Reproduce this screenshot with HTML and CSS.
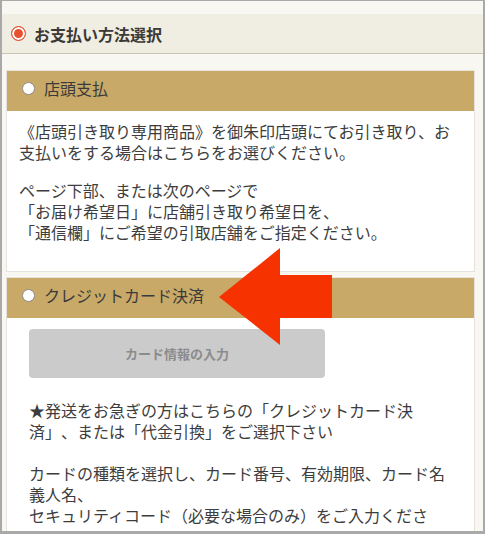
FILE: index.html
```html
<!DOCTYPE html>
<html>
<head>
    <meta charset="utf-8">
    <title>お支払い方法選択</title>
    <link rel="stylesheet" href="styles.css">
</head>
<body>
<div class="frame">
    <h2 class="title"><span class="radio radio-on"></span>お支払い方法選択</h2>

    <div class="methods">
        <div class="method">
            <div class="methodHead"><span class="radio"></span>店頭支払</div>
            <div class="methodBody shop">
                <p>《店頭引き取り専用商品》を御朱印店頭にてお引き取り、お支払いをする場合はこちらをお選びください。</p>
                <p>ページ下部、または次のページで<br>「お届け希望日」に店舗引き取り希望日を、<br>「通信欄」にご希望の引取店舗をご指定ください。</p>
            </div>
        </div>

        <div class="method">
            <div class="methodHead"><span class="radio"></span>クレジットカード決済</div>
            <div class="methodBody card">
                <div class="cardButton">カード情報の入力</div>
                <p>★発送をお急ぎの方はこちらの「クレジットカード決<br>済」、または「代金引換」をご選択下さい</p>
                <p>カードの種類を選択し、カード番号、有効期限、カード名義人名、<br>セキュリティコード（必要な場合のみ）をご入力ください。</p>
            </div>
        </div>
    </div>

    <svg class="arrow" width="124" height="104" viewBox="208 243 124 104">
        <polygon points="217,296 278,247 278,274 330,274 330,317 278,317 278,344" fill="#f63300"/>
    </svg>
</div>
</body>
</html>
```

FILE: styles.css
```css
html, body {
    margin: 0px;
    padding: 0px;
    overflow: hidden;
}

body {
    font-family: "Noto Sans CJK JP", "Noto Sans", sans-serif;
    color: #3d3d3d;
    text-spacing-trim: space-all;
}

.frame {
    position: relative;
    box-sizing: border-box;
    width: 485px;
    height: 534px;
    padding-top: 13px;
    border: 2px solid #a9a9a9;
    border-top-width: 1px;
    border-bottom-width: 3px;
    background-color: #f9f7f1;
    overflow: hidden;
}

.title {
    display: flex;
    align-items: center;
    gap: 8px;
    height: 39px;
    margin: 0px;
    padding-left: 9px;
    border-bottom: 1px solid #c9c4b1;
    background-color: #f0ede2;
    font-size: 16px;
    font-weight: bold;
    color: #3b3935;
    line-height: 1;
}

.radio {
    box-sizing: border-box;
    display: inline-block;
    flex: none;
    width: 13px;
    height: 13px;
    border: 1px solid #8b8b8b;
    border-radius: 50%;
    background-color: #fff;
}

.radio-on {
    width: 15px;
    height: 15px;
    border-color: #e3502e;
    background-color: #e8502f;
    box-shadow: inset 0 0 0 2px #fff;
}

.methods {
    display: flex;
    flex-direction: column;
    gap: 5px;
    padding: 16px 8px 0px 4px;
}

.method {
    border: 1px solid #e6e3dc;
    background-color: #fff;
}

.methodHead {
    display: flex;
    align-items: center;
    gap: 9px;
    height: 40px;
    padding: 0px 0px 6px 15px;
    box-sizing: border-box;
    background-color: #c8a967;
    font-size: 16px;
    color: #3a3a3a;
    line-height: 1;
}

.methodBody {
    font-size: 16px;
    line-height: 21px;
}

.methodBody p {
    margin: 0px;
}

.shop {
    padding: 10px 12px 28px;
}

.shop p + p {
    margin-top: 17px;
}

.card {
    padding: 11px 22px 0px;
}

.card p + p {
    margin-top: 21px;
}

.cardButton {
    width: 296px;
    height: 49px;
    margin-bottom: 22px;
    border-radius: 4px;
    background-color: #cbcbcb;
    color: #8b8b8b;
    font-size: 13px;
    font-weight: bold;
    line-height: 49px;
    text-align: center;
}

.arrow {
    position: absolute;
    left: 208px;
    top: 243px;
    width: 124px;
    height: 104px;
}
```
